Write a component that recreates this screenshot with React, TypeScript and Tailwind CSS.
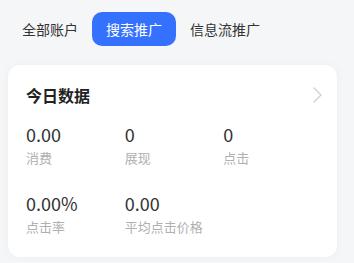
import React from "react";

const items = [
  { v: "0.00", l: "消费" },
  { v: "0", l: "展现" },
  { v: "0", l: "点击" },
  { v: "0.00%", l: "点击率" },
  { v: "0.00", l: "平均点击价格" },
];

export default function App() {
  return (
    <div
      className="w-[354px] h-[263px] bg-[#f5f6f8] pt-3 overflow-hidden"
      style={{ fontFamily: '"Noto Sans CJK SC", "Noto Sans", sans-serif' }}
    >
      <div className="flex pl-2 h-[34px]">
        <div className="px-[14px] leading-[34px] text-[14px] text-[#333]">全部账户</div>
        <div className="px-[14px] leading-[34px] text-[14px] text-white bg-[#3471ff] rounded-[10px]">搜索推广</div>
        <div className="px-[14px] leading-[34px] text-[14px] text-[#333]">信息流推广</div>
      </div>
      <div className="mt-[19px] ml-2 w-[329px] bg-white rounded-[12px] pl-[18px] pr-[15px] pt-[19px] pb-[21px] shadow-[0_0_8px_rgba(0,0,0,0.04)]">
        <div className="flex items-center justify-between h-[22px]">
          <div className="text-[16px] leading-[22px] font-bold text-[#222]">今日数据</div>
          <svg width="9" height="16" viewBox="0 0 9 16" fill="none">
            <path d="M1 1l7 7-7 7" stroke="#cfcfcf" strokeWidth="1.3" strokeLinecap="round" strokeLinejoin="round" />
          </svg>
        </div>
        <div className="grid grid-cols-3 mt-4 gap-y-6">
          {items.map((it, i) => (
            <div key={i} className="flex flex-col">
              <div className="text-[18px] leading-[24px] text-[#333]">{it.v}</div>
              <div className="text-[13px] leading-[18px] mt-[3px] text-[#b0b0b0]">{it.l}</div>
            </div>
          ))}
        </div>
      </div>
    </div>
  );
}
